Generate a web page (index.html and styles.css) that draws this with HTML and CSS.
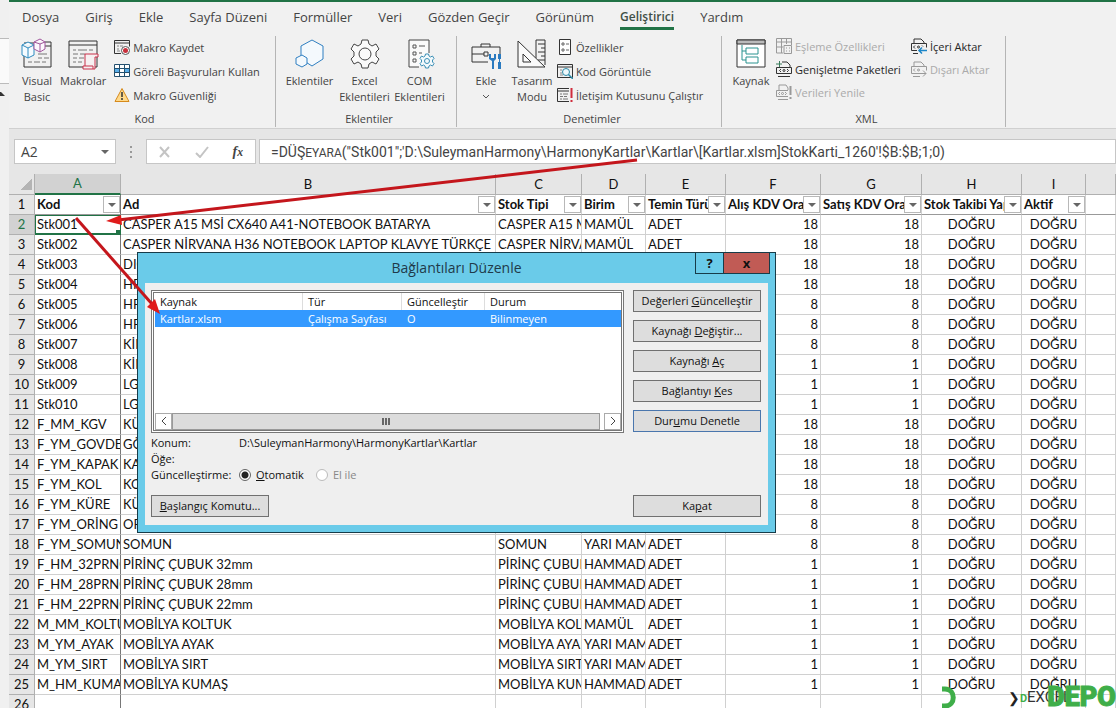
FILE: index.html
```html
<!DOCTYPE html>
<html lang="tr">
<head>
  <meta charset="UTF-8">
  <meta name="viewport" content="width=device-width, initial-scale=1.0">
  <title>Bağlantıları Düzenle</title>
  <link rel="stylesheet" href="styles.css">
</head>
<body>

  <div class="side-strip">
    <div class="side-box"></div>
    <div class="side-arrow"></div>
  </div>

  <div class="app">
    <nav class="tabs">
      <a href="#">Dosya</a>
      <a href="#">Giriş</a>
      <a href="#">Ekle</a>
      <a href="#">Sayfa Düzeni</a>
      <a href="#">Formüller</a>
      <a href="#">Veri</a>
      <a href="#">Gözden Geçir</a>
      <a href="#">Görünüm</a>
      <a href="#" class="active">Geliştirici</a>
      <a href="#">Yardım</a>
    </nav>

    <div class="ribbon">
      <section class="group group-code">
        <div class="group-body">
          <button class="big">
            <svg width="32" height="32" viewBox="0 0 32 32" fill="none">
              <path d="M24 4h6v25H3V17M24 8h6" stroke="#333"/>
              <path d="M3 5h12" stroke="#333"/>
              <path d="M17 16h9M17 20h4M23 20h5M7 24h4M13 24h6M21 24h4" stroke="#777"/>
              <path d="M1 7l6-3 6 3v10l-6 3-6-3zM1 7l6 3 6-3M7 10v10" stroke="#2e8bc0" fill="#f5fbff"/>
              <path d="M13 4l6-3 5 3v7l-5 3-6-3zM13 4l6 2 5-2M19 6v8" stroke="#a0569c" fill="#fdf7fd"/>
            </svg>
            <span>Visual<br>Basic</span>
          </button>
          <button class="big">
            <svg width="32" height="32" viewBox="0 0 32 32" fill="none">
              <path d="M2 3h28v26H2zM2 7h28" stroke="#333"/>
              <path d="M6 12h3M11 12h9M22 12h4M6 16h5M13 16h5M6 20h4M12 20h5M6 24h3M11 24h4" stroke="#777"/>
              <path d="M18 28V16h13v3h-3v12H16v-3h10v3" fill="#f6f0f1" stroke="#c8304a"/>
            </svg>
            <span>Makrolar</span>
          </button>
          <div class="small-list">
            <button class="small">
              <svg width="16" height="16" viewBox="0 0 16 16" fill="none">
                <path d="M7 14.500H.500v-13h15v6M0 4h16" stroke="#333"/>
                <path d="M3 7h2M6 7h3M3 10h2M3 12h3" stroke="#888"/>
                <circle cx="11.500" cy="11.500" r="4" fill="#fff" stroke="#555"/>
                <circle cx="11.500" cy="11.500" r="2.500" fill="#c8303c"/>
              </svg>
              Makro Kaydet
            </button>
            <button class="small">
              <svg width="16" height="16" viewBox="0 0 16 16" fill="none">
                <path d="M1 2h14v12H1z" fill="#fff"/>
                <path d="M1 6h14v4H1z" fill="#5aaee8"/>
                <path d="M6 6h4v4H6z" fill="#fff"/>
                <path d="M.500 1.500h15v12H.500zM0 5.500h16M0 9.500h16M5.500 2v12M10.500 2v12" stroke="#24506f"/>
              </svg>
              Göreli Başvuruları Kullan
            </button>
            <button class="small">
              <svg width="16" height="16" viewBox="0 0 16 16" fill="none">
                <path d="M8 1.500L15 14.500H1z" fill="#ffd98a" stroke="#d68a1c"/>
                <path d="M8 5v5M8 11v2" stroke="#333" stroke-width="1.500"/>
              </svg>
              Makro Güvenliği
            </button>
          </div>
        </div>
        <h2>Kod</h2>
      </section>

      <section class="group group-addins">
        <div class="group-body">
          <button class="big">
            <svg width="32" height="32" viewBox="0 0 32 32" fill="none" stroke="#2f7fc1">
              <path d="M18 2l11 6v13l-11 7-11-7V8z" fill="#f4f9fd"/>
              <path d="M8 17l5 3v6l-5 3-6-3v-6z" fill="#f4f9fd"/>
            </svg>
            <span>Eklentiler</span>
          </button>
          <button class="big">
            <svg width="32" height="32" viewBox="0 0 32 32" fill="none" stroke="#444">
              <path d="M13 2h6l1 4 3 2 4-2 3 5-3 3v4l3 3-3 5-4-2-3 2-1 4h-6l-1-4-3-2-4 2-3-5 3-3v-4l-3-3 3-5 4 2 3-2z" fill="#fafafa"/>
              <circle cx="16" cy="16" r="6"/>
            </svg>
            <span>Excel<br>Eklentileri</span>
          </button>
          <button class="big">
            <svg width="32" height="32" viewBox="0 0 32 32" fill="none">
              <path d="M15 29H5V2h20v13" stroke="#444" fill="#fafafa"/>
              <path d="M9 7h3v3H9zM9 14h3v3H9zM9 21h3v3H9zM15 8h6M15 15h3" stroke="#555"/>
              <g transform="translate(15 15) scale(.5)" stroke="#3b8fb5" stroke-width="2">
                <path d="M13 2h6l1 4 3 2 4-2 3 5-3 3v4l3 3-3 5-4-2-3 2-1 4h-6l-1-4-3-2-4 2-3-5 3-3v-4l-3-3 3-5 4 2 3-2z" fill="#f2f9fc"/>
                <circle cx="16" cy="16" r="5"/>
              </g>
            </svg>
            <span>COM<br>Eklentileri</span>
          </button>
        </div>
        <h2>Eklentiler</h2>
      </section>

      <section class="group group-controls">
        <div class="group-body">
          <button class="big">
            <svg width="32" height="32" viewBox="0 0 32 32" fill="none">
              <path d="M18 24H2V9h28v7M11 9V6h9v3M2 16h12M14 14h4v4h-4z" stroke="#333"/>
              <path d="M19 16v5l3 2v8h2v-8l2-2v-5h-2v4h-3v-4z" fill="#2a7ac0"/>
              <path d="M28 16h3v5h-1v3h1v7h-3v-7h1v-3h-1z" fill="#2a7ac0"/>
            </svg>
            <span>Ekle</span>
            <svg width="8" height="16" viewBox="0 0 8 16" fill="none" stroke="#555"><path d="M1 6l3 3 3-3"/></svg>
          </button>
          <button class="big">
            <svg width="32" height="32" viewBox="0 0 32 32" fill="none" stroke="#333">
              <path d="M20 20V2h9v25M22 6h7M25 10h4M22 14h7M25 18h4M22 22h7"/>
              <path d="M2 3v26h27zM7 16v8h8z" fill="#fafafa"/>
            </svg>
            <span>Tasarım<br>Modu</span>
          </button>
          <div class="small-list">
            <button class="small">
              <svg width="16" height="16" viewBox="0 0 16 16" fill="none">
                <path d="M2.500.500h11v15h-11z" stroke="#333" fill="#fff"/>
                <path d="M5 4h2v2H5zM5 10h2v2H5zM9 5h3M9 11h3" stroke="#666"/>
              </svg>
              Özellikler
            </button>
            <button class="small">
              <svg width="16" height="16" viewBox="0 0 16 16" fill="none">
                <path d="M.5 1.500h15v13H.500zM0 4h16" stroke="#333"/>
                <path d="M3 7h2M3 10h2M3 12h3" stroke="#888"/>
                <circle cx="9" cy="9" r="3.500" stroke="#2a8aa8" fill="#eef8fb"/>
                <path d="M11.500 11.500L16 16" stroke="#2a8aa8" stroke-width="1.500"/>
              </svg>
              Kod Görüntüle
            </button>
            <button class="small">
              <svg width="16" height="16" viewBox="0 0 16 16" fill="none">
                <path d="M12 1.500H.500v13H12M0 4h12" stroke="#333"/>
                <path d="M3 7h2M6 7h5M3 9.500h3M7 9.500h3M3 12h2M6 12h5" stroke="#777"/>
                <path d="M14.500 1v10M14.500 13v2" stroke="#d02c3c" stroke-width="2"/>
              </svg>
              İletişim Kutusunu Çalıştır
            </button>
          </div>
        </div>
        <h2>Denetimler</h2>
      </section>

      <section class="group group-xml">
        <div class="group-body">
          <button class="big">
            <svg width="32" height="32" viewBox="0 0 32 32" fill="none">
              <path d="M2 2h28v27H2z" fill="#fff" stroke="#333"/>
              <path d="M2 2h28v4H2z" fill="#bbb" stroke="#333"/>
              <path d="M7 7v15h4M7 13h4M11 10h12v6H11zM11 19h12v6H11z" stroke="#2a9390"/>
            </svg>
            <span>Kaynak</span>
          </button>
          <div class="small-list">
            <button class="small" disabled>
              <svg width="16" height="16" viewBox="0 0 16 16" fill="none" stroke="#999">
                <path d="M7 15H.500V.500h15V7M0 4h16M5.500 1v14M10.500 1v5M0 9h7"/>
                <path d="M8 7.500h7.500v8H8zM10 10h1M13 10h1M10 13h1M13 13h1"/>
              </svg>
              Eşleme Özellikleri
            </button>
            <button class="small dark">
              <svg width="16" height="16" viewBox="0 0 16 16" fill="none" stroke="#333">
                <path d="M6 1h5l3 3v2M.500 6.500h15v6H.500zM2 15.500h12"/>
                <path d="M5 8L3.500 9.500 5 11M11 8l1.500 1.500L11 11"/>
                <circle cx="8" cy="9.500" r="1"/>
                <path d="M3.500 0v6M0 3h6" stroke="#3a7d5c"/>
              </svg>
              Genişletme Paketleri
            </button>
            <button class="small" disabled>
              <svg width="16" height="16" viewBox="0 0 16 16" fill="none" stroke="#999">
                <path d="M3 6V1h7l2 3v2M12 6.500H.500v6H12M2 15.500h10"/>
                <path d="M4 8L2.500 9.500 4 11M9 8l1.500 1.500L9 11"/>
                <circle cx="6.500" cy="9.500" r="1"/>
                <path d="M14.500 2v9M14.500 13v2" stroke-width="2"/>
              </svg>
              Verileri Yenile
            </button>
          </div>
          <div class="small-list">
            <button class="small dark">
              <svg width="16" height="16" viewBox="0 0 16 16" fill="none" stroke="#333">
                <path d="M3 5V1h7l3 3v2M6 12.500H.500v-7h15v4M2 15.500h5"/>
                <path d="M4 7.500L2.500 9 4 10.500M11 7.500l1 1"/>
                <circle cx="7.500" cy="9" r="1"/>
                <path d="M16 12.500H8M11 9.500l-3 3 3 3" stroke="#1c86c8" stroke-width="1.500"/>
              </svg>
              İçeri Aktar
            </button>
            <button class="small" disabled>
              <svg width="16" height="16" viewBox="0 0 16 16" fill="none" stroke="#999">
                <path d="M3 5V1h7l3 3v2M8 12.500H.500v-7h15v4M2 15.500h7"/>
                <path d="M4 7.500L2.500 9 4 10.500"/>
                <circle cx="7.500" cy="9" r="1"/>
                <path d="M8 12.500h7M12 9.500l3 3-3 3"/>
              </svg>
              Dışarı Aktar
            </button>
          </div>
        </div>
        <h2>XML</h2>
      </section>
    </div>

    <div class="formula-bar">
      <button class="name-box">A2 <span class="caret"></span></button>
      <span class="dots"><i></i><i></i><i></i></span>
      <div class="formula-tools">
        <svg width="12" height="12" viewBox="0 0 12 12" fill="none" stroke="#c4c4c4" stroke-width="2"><path d="M1 1l9 10M10 1L1 11"/></svg>
        <svg width="14" height="12" viewBox="0 0 14 12" fill="none" stroke="#c4c4c4" stroke-width="2"><path d="M1 7l4 4 8-10"/></svg>
        <span class="fx">f<small>x</small></span>
      </div>
      <div class="formula">=DÜŞ<small>EYARA</small>("Stk001";'D:\SuleymanHarmony\HarmonyKartlar\Kartlar\[Kartlar.xlsm]StokKarti_1260'!$B:$B;1;0)</div>
    </div>

    <table class="sheet">
      <colgroup>
        <col class="w-head"><col class="w-a"><col class="w-b"><col class="w-c"><col class="w-d">
        <col class="w-e"><col class="w-f"><col class="w-g"><col class="w-h"><col class="w-i"><col>
      </colgroup>
      <thead>
        <tr>
          <th class="corner"></th><th class="current">A</th><th>B</th><th>C</th><th>D</th>
          <th>E</th><th>F</th><th>G</th><th>H</th><th>I</th><th></th>
        </tr>
      </thead>
      <tbody id="rows"></tbody>
    </table>

    <div class="dialog">
      <div class="title-bar">
        <h1>Bağlantıları Düzenle</h1>
        <div class="title-buttons">
          <button class="help">?</button>
          <button class="close">x</button>
        </div>
      </div>
      <div class="dialog-body">
        <div class="dialog-main">
          <div class="list-box">
            <table class="links">
              <thead>
                <tr><th class="l-source">Kaynak</th><th class="l-type">Tür</th><th class="l-update">Güncelleştir</th><th>Durum</th></tr>
              </thead>
              <tbody>
                <tr><td>Kartlar.xlsm</td><td>Çalışma Sayfası</td><td>O</td><td>Bilinmeyen</td></tr>
              </tbody>
            </table>
            <div class="scrollbar">
              <button><svg width="6" height="10" viewBox="0 0 6 10" fill="none" stroke="#444"><path d="M5 1L1 5l4 4"/></svg></button>
              <div class="thumb"><i></i><i></i><i></i></div>
              <button><svg width="6" height="10" viewBox="0 0 6 10" fill="none" stroke="#444"><path d="M1 1l4 4-4 4"/></svg></button>
            </div>
          </div>
          <div class="details">
            <span>Konum:</span><span>D:\SuleymanHarmony\HarmonyKartlar\Kartlar</span>
            <span>Öğe:</span><span></span>
            <span>Güncelleştirme:</span>
            <span class="radios">
              <label><input type="radio" name="update" checked><span><u>O</u>tomatik</span></label>
              <label class="off"><input type="radio" name="update" disabled>El ile</label>
            </span>
          </div>
          <button class="btn start"><u>B</u>aşlangıç Komutu...</button>
        </div>
        <div class="dialog-side">
          <button class="btn">Değerleri <u>G</u>üncelleştir</button>
          <button class="btn">Kaynağı <u>D</u>eğiştir...</button>
          <button class="btn">Kaynağı <u>A</u>ç</button>
          <button class="btn">Bağlantıyı <u>K</u>es</button>
          <button class="btn focused">Dur<u>u</u>mu Denetle</button>
          <button class="btn last">Ka<u>p</u>at</button>
        </div>
      </div>
    </div>
  </div>

  <svg class="arrows" width="660" height="330" viewBox="0 0 660 330">
    <g stroke="#c4161c" stroke-width="3" fill="#e01b1b">
      <path d="M637 160L118 220"/>
      <path d="M106 221l15-6 1 10z" stroke="none"/>
      <path d="M76 218l76 86"/>
      <path d="M160 314l-13-7 8-8z" stroke="none"/>
    </g>
  </svg>

  <div class="logo">
    <svg width="20" height="26" viewBox="0 0 20 26" fill="none" stroke="#3fae49" stroke-width="5"><path d="M2 5h3c11 0 11 17 0 17H2"/></svg>
    <span class="logo-mark">❯</span>
    <span class="logo-excel"><b>D</b>EXCEL</span>
    <span class="logo-depo">DEPO</span>
  </div>

  <script>
    const headers = ['Kod', 'Ad', 'Stok Tipi', 'Birim', 'Temin Türü', 'Alış KDV Oranı', 'Satış KDV Oranı', 'Stok Takibi Yap', 'Aktif'];

    const rows = [
      ['Stk001', 'CASPER A15 MSİ CX640 A41-NOTEBOOK BATARYA', 'CASPER A15 MSİ', 'MAMÜL', 'ADET', 18],
      ['Stk002', 'CASPER NİRVANA H36 NOTEBOOK LAPTOP KLAVYE TÜRKÇE', 'CASPER NİRVANA', 'MAMÜL', 'ADET', 18],
      ['Stk003', 'DIG', '', '', '', 18],
      ['Stk004', 'HP', '', '', '', 18],
      ['Stk005', 'HP', '', '', '', 8],
      ['Stk006', 'HP', '', '', '', 8],
      ['Stk007', 'KİN', '', '', '', 8],
      ['Stk008', 'KİN', '', '', '', 1],
      ['Stk009', 'LG', '', '', '', 1],
      ['Stk010', 'LG', '', '', '', 1],
      ['F_MM_KGV', 'KÜ', '', '', '', 18],
      ['F_YM_GOVDE', 'GÖ', '', '', '', 18],
      ['F_YM_KAPAK', 'KA', '', '', '', 18],
      ['F_YM_KOL', 'KO', '', '', '', 18],
      ['F_YM_KÜRE', 'KÜ', '', '', '', 8],
      ['F_YM_ORİNG', 'OR', '', '', '', 8],
      ['F_YM_SOMUN', 'SOMUN', 'SOMUN', 'YARI MAMÜL', 'ADET', 8],
      ['F_HM_32PRNC', 'PİRİNÇ ÇUBUK 32mm', 'PİRİNÇ ÇUBUK', 'HAMMADDE', 'ADET', 1],
      ['F_HM_28PRNC', 'PİRİNÇ ÇUBUK 28mm', 'PİRİNÇ ÇUBUK', 'HAMMADDE', 'ADET', 1],
      ['F_HM_22PRNC', 'PİRİNÇ ÇUBUK 22mm', 'PİRİNÇ ÇUBUK', 'HAMMADDE', 'ADET', 1],
      ['M_MM_KOLTUK', 'MOBİLYA KOLTUK', 'MOBİLYA KOLTUK', 'MAMÜL', 'ADET', 1],
      ['M_YM_AYAK', 'MOBİLYA AYAK', 'MOBİLYA AYAK', 'YARI MAMÜL', 'ADET', 1],
      ['M_YM_SIRT', 'MOBİLYA SIRT', 'MOBİLYA SIRT', 'YARI MAMÜL', 'ADET', 1],
      ['M_HM_KUMAŞ', 'MOBİLYA KUMAŞ', 'MOBİLYA KUMAŞ', 'HAMMADDE', 'ADET', 1]
    ];

    const tbody = document.getElementById('rows');

    function addRow(number, cells, className) {
      const tr = document.createElement('tr');
      tr.className = className;
      tr.innerHTML = '<th>' + number + '</th>' + cells.join('') + '<td></td>';
      tbody.appendChild(tr);
    }

    // Row 1 holds the filter buttons
    addRow(1, headers.map(h => '<td>' + h + '<button class="filter"><span class="caret"></span></button></td>'), 'filters');

    rows.forEach((row, index) => {
      const values = [...row, row[5], 'DOĞRU', 'DOĞRU'];
      addRow(index + 2, values.map(v => '<td>' + v + '</td>'), index === 0 ? 'selected' : '');
    });

    addRow(26, headers.map(() => '<td></td>'), '');
  </script>

</body>
</html>
```
FILE: styles.css
```css
* {
  box-sizing: border-box;
}

body {
  margin: 0;
  height: 100vh;
  display: flex;
  overflow: hidden;
  position: relative;
  background-color: #f0f0f0;
  color: #444;
  font-family: "Open Sans", "Noto Sans", sans-serif;
  font-size: 13px;
}

button {
  font: inherit;
  color: inherit;
  background: none;
  border: none;
  padding: 0;
}

h1, h2 {
  margin: 0;
  font-weight: normal;
}

.side-strip {
  width: 9px;
  flex: none;
  padding-top: 38px;
}

.side-box {
  height: 46px;
  background-color: #fafafa;
  border-top: 1px solid #bbb;
  border-bottom: 1px solid #bbb;
}

.side-arrow {
  width: 5px;
  margin-top: 8px;
  border-bottom: 4px solid #333;
  border-right: 4px solid transparent;
}

.app {
  flex: 1;
  min-width: 0;
  background-color: #e6e6e6;
  border-top: 2px solid #217346;
}

/* Ribbon */
.tabs {
  display: flex;
  gap: 26px;
  height: 34px;
  padding: 5px 13px 0;
  background-color: #f1f1f1;
}

.tabs a {
  height: 23px;
  line-height: 20px;
  color: #444;
  text-decoration: none;
  white-space: nowrap;
}

.tabs .active {
  font-size: 12px;
  font-weight: 600;
  color: #3f4f46;
  border-bottom: 3px solid #217346;
}

.ribbon {
  display: flex;
  height: 93px;
  background-color: #f1f1f1;
  border-bottom: 1px solid #d0d0d0;
  font-size: 11px;
}

.group {
  display: flex;
  flex-direction: column;
  height: 91px;
  border-right: 1px solid #b5b5b5;
}

.group-code {
  width: 267px;
  padding-left: 5px;
}

.group-addins {
  width: 181px;
  padding-left: 6px;
}

.group-controls {
  width: 265px;
  padding-left: 6px;
}

.group-xml {
  width: 284px;
  padding-left: 6px;
}

.group-body {
  display: flex;
  flex: 1;
}

.group h2 {
  height: 16px;
  line-height: 16px;
  font-size: 11px;
  text-align: center;
}

.big {
  display: flex;
  flex-direction: column;
  align-items: center;
  min-width: 46px;
  padding-top: 2px;
  line-height: 16px;
  white-space: nowrap;
}

.big svg:first-child {
  margin-bottom: 3px;
}

.group-addins .big {
  min-width: 55px;
}

.small-list {
  display: flex;
  flex-direction: column;
  gap: 8px;
  padding: 3px 0 0 8px;
}

.group-controls .small-list {
  padding-left: 2px;
}

.group-xml .small-list {
  gap: 7px;
  padding: 2px 0 0 2px;
}

.group-xml .small-list:last-child {
  padding-left: 10px;
}

.small {
  display: flex;
  align-items: center;
  gap: 3px;
  height: 16px;
  white-space: nowrap;
}

.small:disabled {
  color: #aaa;
}

.small.dark {
  color: #262626;
}

/* Formula bar */
.formula-bar {
  display: flex;
  height: 45px;
  padding: 10px 0 10px 5px;
  font-size: 14px;
}

.name-box,
.formula-tools,
.formula {
  background-color: #fff;
  border: 1px solid #c6c6c6;
}

.name-box {
  display: flex;
  justify-content: space-between;
  align-items: center;
  width: 102px;
  padding: 0 6px;
}

.caret {
  border: 4px solid transparent;
  border-top-color: #666;
  border-bottom: none;
}

.dots {
  display: flex;
  flex-direction: column;
  justify-content: center;
  align-items: center;
  gap: 3px;
  width: 30px;
}

.dots i {
  width: 2px;
  height: 2px;
  background-color: #999;
}

.formula-tools {
  display: flex;
  align-items: center;
  justify-content: space-between;
  width: 110px;
  margin-right: 3px;
  padding: 0 12px;
}

.fx {
  font-family: "Liberation Serif", serif;
  font-style: italic;
  font-weight: bold;
}

.formula {
  flex: 1;
  padding-left: 11px;
  line-height: 24px;
  font-family: Roboto, sans-serif;
  white-space: nowrap;
}

.formula small {
  font-size: 12px;
}

/* Sheet */
.sheet {
  width: 100%;
  table-layout: fixed;
  border-collapse: separate;
  border-spacing: 0;
  background-color: #fff;
  color: #111;
  font-family: Lato, "Open Sans", sans-serif;
  font-size: 13px;
}

.w-head { width: 26px; }
.w-a { width: 86px; }
.w-b { width: 375px; }
.w-c { width: 86px; }
.w-d { width: 64px; }
.w-e { width: 80px; }
.w-f { width: 95px; }
.w-g { width: 101px; }
.w-h { width: 100px; }
.w-i { width: 64px; }

.sheet th,
.sheet td {
  height: 20px;
  padding: 0 2px;
  line-height: 19px;
  overflow: hidden;
  white-space: nowrap;
  border-right: 1px solid #d0d0d0;
  border-bottom: 1px solid #d0d0d0;
}

.sheet th {
  font-weight: normal;
  background-color: #e6e6e6;
  border-color: #b0b0b0;
}

.sheet thead th {
  height: 21px;
  line-height: 19px;
}

.sheet thead .current {
  color: #217346;
  background-color: #d2d2d2;
  border-bottom: 2px solid #217346;
}

.sheet .corner {
  background: linear-gradient(135deg, transparent 50%, #b4b4b4 50%) no-repeat 12px 5px / 11px 11px #e6e6e6;
}

.sheet td:nth-child(2) {
  border-right-color: #777;
}

.sheet td:nth-child(7),
.sheet td:nth-child(8) {
  text-align: right;
}

.sheet td:nth-child(9),
.sheet td:nth-child(10) {
  text-align: center;
}

.sheet .filters td {
  position: relative;
  font-weight: bold;
  text-align: left;
  border-bottom-color: #999;
}

.filter {
  position: absolute;
  right: 0;
  top: 1px;
  display: flex;
  align-items: center;
  justify-content: center;
  width: 17px;
  height: 17px;
  background-color: #fff;
  border: 1px solid #b8b8b8;
}

.selected th {
  color: #217346;
  background-color: #d2d2d2;
}

.sheet .selected td:nth-child(2) {
  position: relative;
  box-shadow: inset 1px 1px #217346, inset 0 -1px #217346;
  border-color: #217346;
}

/* Fill handle */
.selected td:nth-child(2)::after {
  content: "";
  position: absolute;
  right: 0;
  bottom: 0;
  width: 4px;
  height: 4px;
  background-color: #217346;
}

/* Dialog */
.dialog {
  position: absolute;
  left: 137px;
  top: 252px;
  width: 639px;
  padding: 0 7px 7px;
  background-color: #6acbe9;
  border: 1px solid #173c49;
  color: #111;
  font-size: 11px;
}

.title-bar {
  display: flex;
  position: relative;
  height: 30px;
}

.title-bar h1 {
  flex: 1;
  line-height: 30px;
  font-size: 14px;
  text-align: center;
  color: #1f3a4a;
}

.title-buttons {
  position: absolute;
  right: -2px;
  top: -1px;
  display: flex;
  height: 22px;
  font-weight: bold;
  font-size: 13px;
}

.title-buttons button {
  width: 29px;
  border: 1px solid #173c49;
}

.title-buttons .close {
  width: 47px;
  margin-left: -1px;
  background-color: #c15b55;
}

.dialog-body {
  display: flex;
  gap: 9px;
  padding: 7px 7px 8px 6px;
  background-color: #efefef;
}

.dialog-main {
  flex: 1;
  display: flex;
  flex-direction: column;
}

.list-box {
  display: flex;
  flex-direction: column;
  justify-content: space-between;
  height: 143px;
  padding-left: 1px;
  background-color: #fff;
  border: 3px double #777;
}

.links {
  width: 100%;
  table-layout: fixed;
  border-spacing: 0;
}

.links th,
.links td {
  height: 17px;
  padding: 0 5px;
  line-height: 16px;
  text-align: left;
  font-weight: normal;
}

.links th {
  border-right: 1px solid #ddd;
}

.links th:last-child {
  border-right: none;
}

.links td {
  color: #fff;
  background-color: #3399ff;
}

.l-source { width: 148px; }
.l-type { width: 99px; }
.l-update { width: 83px; }

.scrollbar {
  display: flex;
  height: 17px;
}

.scrollbar button {
  width: 17px;
  background-color: #fff;
  border: 1px solid #aaa;
}

.thumb {
  flex: 1;
  display: flex;
  align-items: center;
  justify-content: center;
  gap: 1px;
  margin-right: 4px;
  background-color: #dcdcdc;
  border: 1px solid #999;
}

.thumb i {
  width: 2px;
  height: 7px;
  background-color: #666;
}

.details {
  display: grid;
  grid-template-columns: 88px 1fr;
  grid-auto-rows: 16px;
  margin-top: 2px;
  line-height: 16px;
}

.radios {
  display: flex;
  gap: 12px;
}

.radios label {
  display: flex;
  align-items: center;
  gap: 5px;
}

.radios input {
  appearance: none;
  width: 12px;
  height: 12px;
  margin: 0;
  border: 1px solid #666;
  border-radius: 50%;
  background-color: #fff;
}

.radios input:checked {
  background: radial-gradient(circle, #222 3px, #fff 4px);
}

.radios .off {
  color: #888;
}

.radios .off input {
  border-color: #bbb;
}

.btn {
  width: 128px;
  height: 22px;
  padding-bottom: 2px;
  background-color: #dddddd;
  border: 1px solid #707070;
}

.btn.start {
  width: 118px;
  margin-top: 12px;
}

.btn.focused {
  border-color: #4a76ad;
}

.dialog-side {
  display: flex;
  flex-direction: column;
  gap: 8px;
}

.btn.last {
  margin-top: auto;
}

/* Overlays */
.arrows {
  position: absolute;
  left: 0;
  top: 0;
  pointer-events: none;
}

.logo {
  position: absolute;
  right: 0;
  bottom: -2px;
  display: flex;
  align-items: center;
  height: 26px;
}

.logo-mark {
  margin-left: 48px;
  font-size: 14px;
  color: #222;
}

.logo-excel {
  font-family: Roboto, sans-serif;
  font-size: 15px;
  color: #333;
}

.logo-excel b {
  font-size: 11px;
  color: #3fae49;
}

.logo-depo {
  margin-left: -24px;
  font-family: Roboto, sans-serif;
  font-size: 27px;
  font-weight: 900;
  color: #3fae49;
  -webkit-text-stroke: 1px #3fae49;
}
```
